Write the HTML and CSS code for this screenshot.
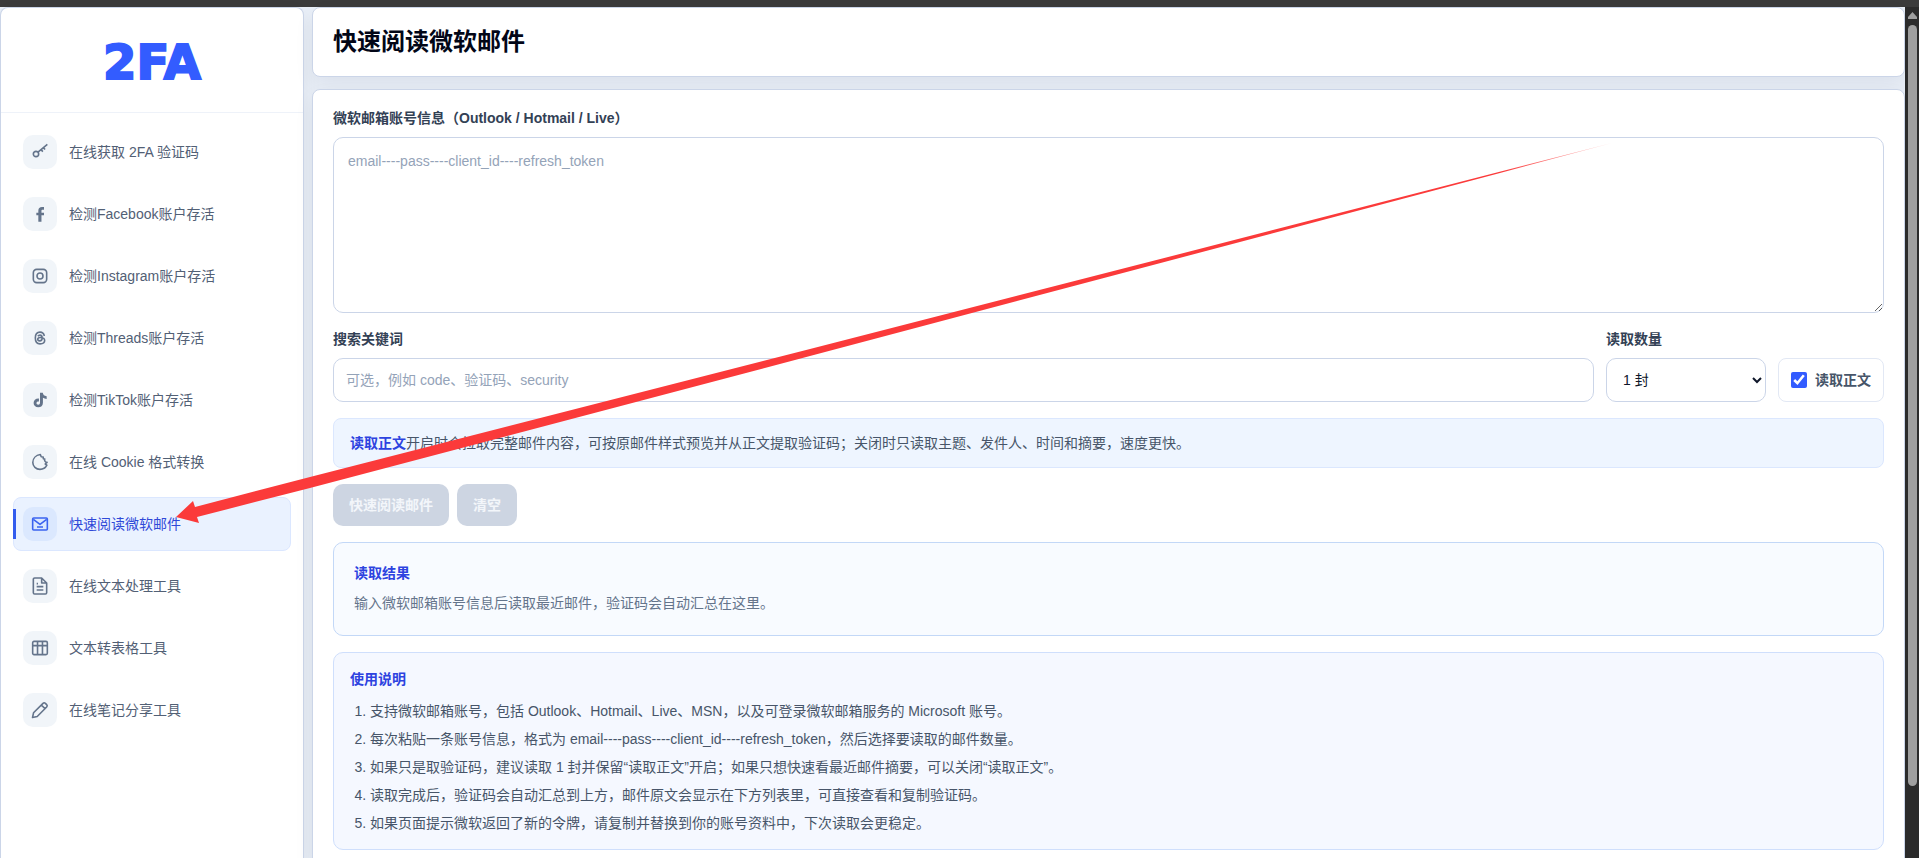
FILE: index.html
```
<!DOCTYPE html>
<html lang="zh-CN">
<head>
  <meta charset="UTF-8">
  <meta name="viewport" content="width=device-width, initial-scale=1.0">
  <title>快速阅读微软邮件</title>
  <link rel="stylesheet" href="styles.css">
</head>
<body>
  <div class="topbar"></div>
  <div class="app">
    <aside class="sidebar">
      <div class="logo">2FA</div>
      <nav class="menu">
        <a href="#" class="menu-item">
          <span class="menu-icon"><svg viewBox="0 0 24 24"><circle cx="6" cy="15" r="4"/><path d="M9 12.200L23 .5M13.500 8.500l2.800 3M17 5.500l2.600 2.800"/></svg></span>
          在线获取 2FA 验证码
        </a>
        <a href="#" class="menu-item">
          <span class="menu-icon"><svg viewBox="0 0 24 24"><path class="solid" d="M9.500 23.500V14H6.500v-4h3V7c0-3.500 2-5.500 5.500-5.500h3v4h-2c-1.300 0-1.800.5-1.800 1.700V10H18v4h-3.800v9.500z"/></svg></span>
          检测Facebook账户存活
        </a>
        <a href="#" class="menu-item">
          <span class="menu-icon"><svg viewBox="0 0 24 24"><rect x="2" y="2" width="20" height="20" rx="5"/><circle cx="12" cy="12" r="4.500"/></svg></span>
          检测Instagram账户存活
        </a>
        <a href="#" class="menu-item">
          <span class="menu-icon"><svg viewBox="0 0 24 24"><path d="M18.500 9C17.800 5.200 15.500 3.200 12 3.200c-4.500 0-7 3-7 8.800s2.500 8.800 7 8.800c4.200 0 7-2 7-5 0-3.200-2.800-4.600-6.500-4.600-2.400 0-3.900.9-3.900 2.700 0 1.500 1.300 2.400 3 2.400 2.500 0 3.700-1.600 3.700-4.300 0-2.900-1.100-4.300-3.300-4.300-1.500 0-2.500.6-3.200 1.700"/></svg></span>
          检测Threads账户存活
        </a>
        <a href="#" class="menu-item">
          <span class="menu-icon"><svg viewBox="0 0 24 24"><path class="solid" d="M12 1h4.200c.3 3 2.200 4.900 5.800 5.200v4.200c-2.200 0-4-.6-5.600-1.700V16c0 4.200-3 7-7 7s-7-2.800-7-6.500c0-4.100 3.300-7 8-6.600v4.300c-2.200-.3-3.700.7-3.700 2.400 0 1.400 1.200 2.400 2.600 2.400 1.800 0 2.700-1.100 2.700-3z"/></svg></span>
          检测TikTok账户存活
        </a>
        <a href="#" class="menu-item">
          <span class="menu-icon"><svg viewBox="0 0 24 24"><path d="M12.500.8C6 1.800 1.200 6.500 1.200 12.800 1.200 18.600 6 23 12 23c4.600 0 8.300-2.300 10.300-6.300l-2.500-1.700 2.800-2.500c-2.700-.2-4.300-2-3.500-4.800L17 7l-.2-2.500-3-.4z"/></svg></span>
          在线 Cookie 格式转换
        </a>
        <a href="#" class="menu-item active">
          <span class="menu-icon"><svg viewBox="0 0 24 24"><rect x="1" y="3" width="22" height="18" rx="1.500"/><path d="M2 5l10 7.500L22 5M7.500 16.500h9"/></svg></span>
          快速阅读微软邮件
        </a>
        <a href="#" class="menu-item">
          <span class="menu-icon"><svg viewBox="0 0 24 24"><path d="M14.500 0H4c-1.100 0-2 .9-2 2v20c0 1.100.9 2 2 2h16c1.100 0 2-.9 2-2V7.500zM14.500 0v7.500H22M7 13h10M7 18h10M7 8.500h2"/></svg></span>
          在线文本处理工具
        </a>
        <a href="#" class="menu-item">
          <span class="menu-icon"><svg viewBox="0 0 24 24"><rect x="1" y="2" width="22" height="20" rx="2"/><path d="M1 8.500h22M8.300 2v20M15.700 2v20"/></svg></span>
          文本转表格工具
        </a>
        <a href="#" class="menu-item">
          <span class="menu-icon"><svg viewBox="0 0 24 24"><path d="M.8 23.200l1.500-7L16.500 2c1-1 2.500-1 3.500 0l2 2c1 1 1 2.500 0 3.500L7.800 21.700zM14 4.500l5.500 5.500"/></svg></span>
          在线笔记分享工具
        </a>
      </nav>
    </aside>

    <main class="main">
      <header class="panel page-header">
        <h1>快速阅读微软邮件</h1>
      </header>

      <section class="panel content">
        <div class="field">
          <label for="account">微软邮箱账号信息（Outlook / Hotmail / Live）</label>
          <textarea id="account" placeholder="email----pass----client_id----refresh_token"></textarea>
        </div>

        <div class="row">
          <div class="field grow">
            <label for="keyword">搜索关键词</label>
            <input type="text" id="keyword" placeholder="可选，例如 code、验证码、security">
          </div>
          <div class="field count">
            <label for="count">读取数量</label>
            <select id="count">
              <option>1 封</option>
              <option>3 封</option>
              <option>5 封</option>
            </select>
          </div>
          <label class="check"><input type="checkbox" checked>读取正文</label>
        </div>

        <p class="notice"><strong>读取正文</strong>开启时会拉取完整邮件内容，可按原邮件样式预览并从正文提取验证码；关闭时只读取主题、发件人、时间和摘要，速度更快。</p>

        <div class="buttons">
          <button type="button" disabled>快速阅读邮件</button>
          <button type="button" disabled>清空</button>
        </div>

        <div class="result">
          <h2>读取结果</h2>
          <p>输入微软邮箱账号信息后读取最近邮件，验证码会自动汇总在这里。</p>
        </div>

        <div class="guide">
          <h2>使用说明</h2>
          <ol>
            <li>支持微软邮箱账号，包括 Outlook、Hotmail、Live、MSN，以及可登录微软邮箱服务的 Microsoft 账号。</li>
            <li>每次粘贴一条账号信息，格式为 email----pass----client_id----refresh_token，然后选择要读取的邮件数量。</li>
            <li>如果只是取验证码，建议读取 1 封并保留“读取正文”开启；如果只想快速看最近邮件摘要，可以关闭“读取正文”。</li>
            <li>读取完成后，验证码会自动汇总到上方，邮件原文会显示在下方列表里，可直接查看和复制验证码。</li>
            <li>如果页面提示微软返回了新的令牌，请复制并替换到你的账号资料中，下次读取会更稳定。</li>
          </ol>
        </div>
      </section>
    </main>

    <div class="scrollbar">
      <svg class="scroll-up" viewBox="0 0 9 7"><path d="M4.500 0L9 5v2H0V5z"/></svg>
      <div class="scroll-thumb"></div>
    </div>
  </div>

  <!-- arrow pointing at the active menu item -->
  <svg class="arrow" viewBox="0 0 1640 540" width="1640" height="540">
    <defs>
      <linearGradient id="fade" gradientUnits="userSpaceOnUse" x1="1500" y1="0" x2="1612" y2="0">
        <stop offset="0" stop-color="#fb3a3a"/>
        <stop offset="1" stop-color="#fb3a3a" stop-opacity="0.3"/>
      </linearGradient>
    </defs>
    <path fill="url(#fade)" d="M176 517L193 501L195 507L310 477L810 349L1612 143L1500 173L810 356L310 488L197 517L199 523Z"/>
  </svg>
</body>
</html>
```

FILE: styles.css
```
* {
  box-sizing: border-box;
}

body {
  margin: 0;
  height: 100vh;
  overflow: hidden;
  display: flex;
  flex-direction: column;
  background: #e9eff8;
  color: #334155;
  font-family: "Liberation Sans", Arial, "Noto Sans CJK SC", sans-serif;
  font-size: 14px;
  line-height: 20px;
}

h1,
h2,
p,
ol {
  margin: 0;
}

.topbar {
  flex: none;
  height: 7px;
  background: #3b3b3b;
}

.app {
  flex: 1;
  min-height: 0;
  display: flex;
}

/* sidebar */
.sidebar {
  flex: none;
  width: 304px;
  margin-right: 8px;
  background: #fff;
  border: 1px solid #cbd5e8;
  border-bottom: 0;
  border-radius: 8px 8px 0 0;
  box-shadow: 0 8px 20px rgba(15, 23, 42, 0.06);
}

.logo {
  height: 105px;
  padding-top: 4px;
  display: flex;
  align-items: center;
  justify-content: center;
  border-bottom: 1px solid #eef2f9;
  color: #335cff;
  font-family: "Arial Black", "DejaVu Sans", sans-serif;
  font-size: 48px;
  font-weight: 900;
  -webkit-text-stroke: 2px #335cff;
}

.menu {
  display: flex;
  flex-direction: column;
  gap: 8px;
  padding: 12px;
}

.menu-item {
  position: relative;
  display: flex;
  align-items: center;
  gap: 12px;
  height: 54px;
  padding: 0 9px;
  border: 1px solid transparent;
  border-radius: 8px;
  color: #526075;
  text-decoration: none;
}

.menu-icon {
  width: 34px;
  height: 34px;
  display: flex;
  align-items: center;
  justify-content: center;
  border-radius: 10px;
  background: #f1f5f9;
  color: #64748b;
}

.menu-icon svg {
  width: 16px;
  height: 16px;
  overflow: visible;
  fill: none;
  stroke: currentColor;
  stroke-width: 2.4;
  stroke-linejoin: round;
}

.menu-icon .solid {
  fill: currentColor;
  stroke: none;
}

.menu-item.active {
  background: #eaf2ff;
  border-color: #dbe7ff;
  color: #3049d8;
}

.menu-item.active .menu-icon {
  background: #dbe8fe;
  color: #3b63f0;
}

.menu-item.active::before {
  content: "";
  position: absolute;
  left: -1px;
  top: 11px;
  width: 3px;
  height: 30px;
  background: #335cee;
}

/* main column */
.main {
  flex: 1;
  min-width: 0;
  display: flex;
  flex-direction: column;
  gap: 12px;
}

.panel {
  background: #fff;
  border: 1px solid #cbd5e8;
  border-radius: 8px;
  box-shadow: 0 8px 20px rgba(15, 23, 42, 0.06);
}

.page-header {
  flex: none;
  height: 70px;
  padding: 16px 20px;
}

.page-header h1 {
  color: #020617;
  font-size: 24px;
  line-height: 36px;
}

.content {
  flex: none;
  display: flex;
  flex-direction: column;
  gap: 16px;
  padding: 18px 20px 20px;
}

.field {
  display: flex;
  flex-direction: column;
  gap: 9px;
}

.field label {
  font-weight: bold;
}

.row {
  display: flex;
  align-items: flex-end;
  gap: 12px;
}

.grow {
  flex: 1;
}

.count {
  width: 160px;
}

textarea,
input[type="text"],
select {
  width: 100%;
  border: 1px solid #cbd5e8;
  border-radius: 10px;
  background: #fff;
  color: #0f172a;
  font: inherit;
}

textarea {
  display: block;
  height: 176px;
  padding: 13px 14px;
  resize: vertical;
}

input[type="text"] {
  height: 44px;
  padding: 0 12px;
}

select {
  height: 44px;
  padding: 0 0 0 12px;
}

::placeholder {
  color: #94a3b8;
}

.check {
  height: 44px;
  display: flex;
  align-items: center;
  gap: 8px;
  padding: 0 12px;
  border: 1px solid #e2e8f4;
  border-radius: 8px;
  color: #475569;
  font-weight: bold;
}

.check input {
  width: 16px;
  height: 16px;
  margin: 0;
  accent-color: #335cff;
}

.notice {
  padding: 14px 16px;
  border: 1px solid #dbe7fe;
  border-radius: 8px;
  background: #eef5ff;
  color: #475569;
}

.notice strong,
.result h2,
.guide h2 {
  color: #2d43e0;
}

.buttons {
  display: flex;
  gap: 8px;
}

.buttons button {
  height: 42px;
  padding: 0 16px;
  border: 0;
  border-radius: 10px;
  background: #cdd5e2;
  color: #f3f6fa;
  font: inherit;
  font-weight: bold;
}

.result h2,
.guide h2 {
  font-size: 14px;
  line-height: 20px;
}

.result {
  min-height: 94px;
  padding: 20px;
  border: 1px solid #c3d8f7;
  border-radius: 10px;
  background: #f8fbff;
  color: #64748b;
}

.result p {
  margin-top: 10px;
}

.guide {
  padding: 16px 16px 12px;
  border: 1px solid #cfdffc;
  border-radius: 10px;
  background: #f5f8ff;
  color: #475569;
}

.guide ol {
  margin-top: 8px;
  padding-left: 20px;
  line-height: 28px;
}

/* scrollbar */
.scrollbar {
  flex: none;
  width: 14px;
  display: flex;
  flex-direction: column;
  align-items: center;
  gap: 6px;
  padding-top: 5px;
  background: #2b2b2b;
}

.scroll-up {
  flex: none;
  width: 9px;
  height: 7px;
  fill: #9f9f9f;
}

.scroll-thumb {
  width: 9px;
  height: 90%;
  border-radius: 5px;
  background: #9f9f9f;
}

.arrow {
  position: absolute;
  top: 0;
  left: 0;
  pointer-events: none;
}
```
